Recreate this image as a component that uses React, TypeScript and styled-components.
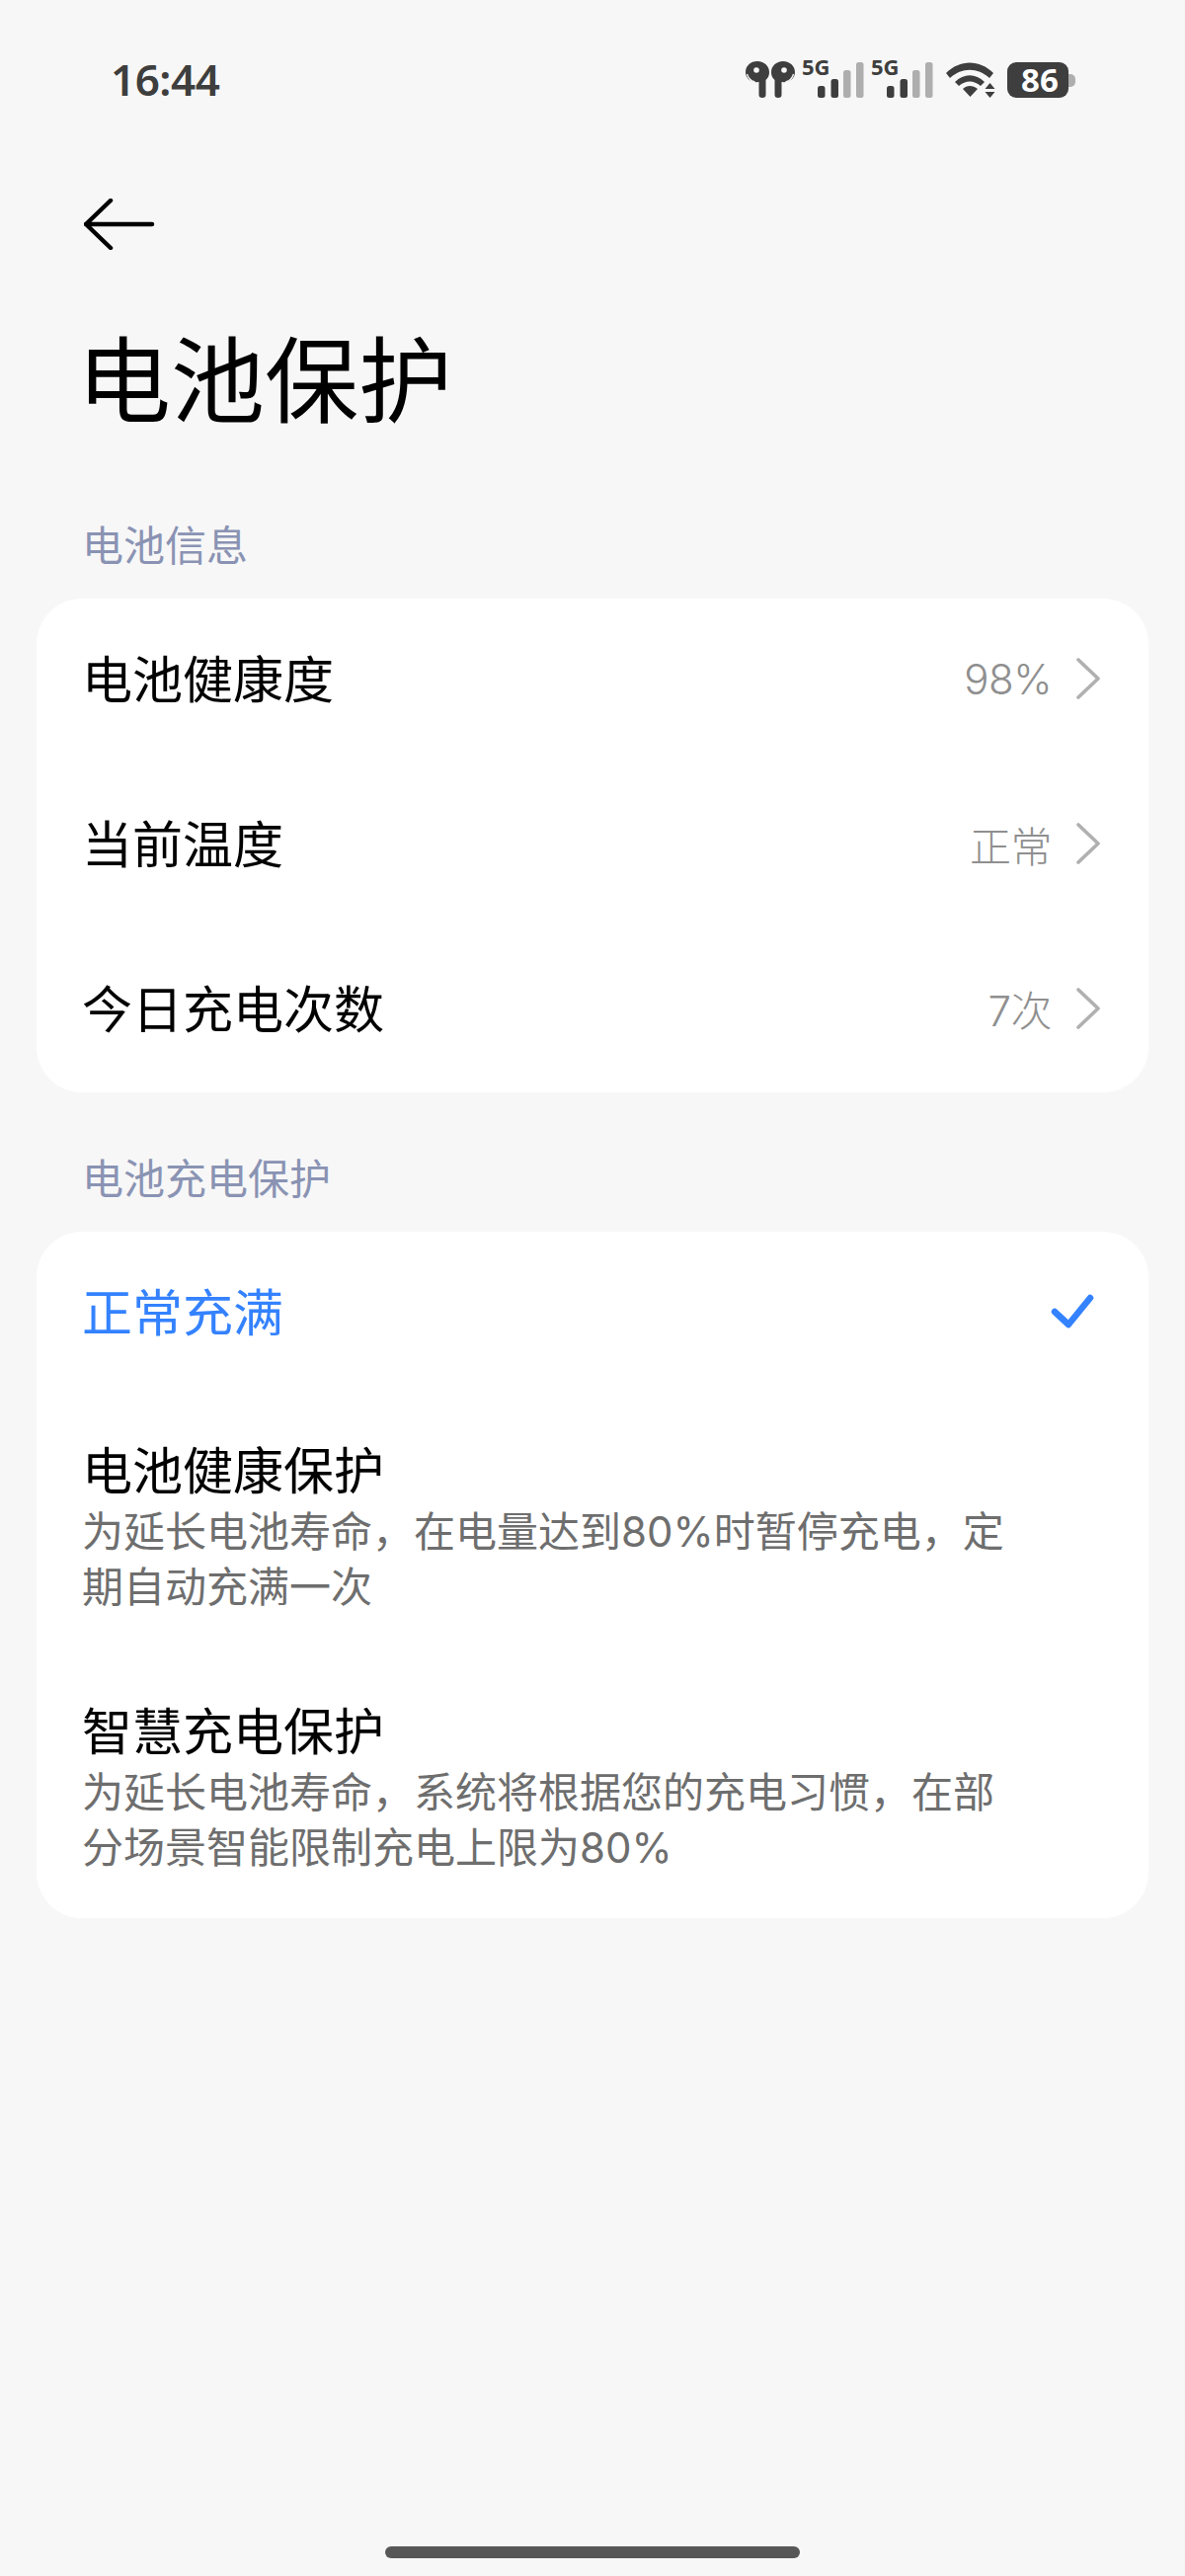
import styled, { createGlobalStyle } from "styled-components";

const GlobalStyle = createGlobalStyle`
  html, body {
    margin: 0;
    padding: 0;
    background: #f7f7f7;
  }
  * {
    box-sizing: border-box;
  }
`;

const cjk = `"Noto Sans CJK SC", "Noto Sans", sans-serif`;
const latinCjk = `Inter, "Noto Sans CJK SC", sans-serif`;

const Page = styled.div`
  width: 1200px;
  height: 2608px;
  background: #f7f7f7;
  font-family: ${cjk};
  display: flex;
  flex-direction: column;
  overflow: hidden;
`;

const StatusBar = styled.div`
  height: 80px;
  margin-top: 40px;
  padding: 0 111px 0 112px;
  display: flex;
  align-items: center;
  justify-content: space-between;
`;

const Time = styled.span`
  font-family: "Noto Sans", sans-serif;
  font-size: 44px;
  font-weight: 600;
  color: #3e3e3e;
  letter-spacing: -0.5px;
`;

const StatusIcons = styled.div`
  display: flex;
  align-items: flex-start;
  height: 40px;
  gap: 7px;
  svg {
    display: block;
    overflow: visible;
  }
`;

const WifiIcon = styled.svg`
  margin-left: 6px;
`;

const Battery = styled.div`
  position: relative;
  width: 62px;
  height: 36px;
  margin: 3px 7px 0 5px;
  padding-left: 4px;
  border-radius: 9px;
  background: #3e3e3e;
  color: #fff;
  font-family: "Noto Sans", sans-serif;
  font-size: 33px;
  font-weight: 700;
  line-height: 36px;
  text-align: center;
  &::after {
    content: "";
    position: absolute;
    right: -7px;
    top: 12px;
    width: 7px;
    height: 13px;
    border-radius: 0 5px 5px 0;
    background: #aeaeae;
  }
`;

const BackButton = styled.div`
  margin: 81px 0 0 85px;
  height: 52px;
  display: flex;
  align-items: center;
`;

const PageTitle = styled.h1`
  margin: 67px 0 0 78px;
  font-size: 95px;
  font-weight: 400;
  line-height: 120px;
  color: #000;
`;

const SectionLabel = styled.div<{ $top: number }>`
  margin: ${(p) => p.$top}px 0 0 83px;
  font-size: 42px;
  line-height: 60px;
  color: #8a93b3;
`;

const Card = styled.div`
  margin: 26px 37px 0;
  background: #fff;
  border-radius: 46px;
  display: flex;
  flex-direction: column;
`;

const NavRow = styled.div`
  height: 166.7px;
  padding: 0 48px 4px 46px;
  display: flex;
  align-items: center;
  justify-content: space-between;
`;

const RowTitle = styled.div<{ $active?: boolean }>`
  font-size: 51px;
  line-height: 66px;
  padding-bottom: 4px;
  color: ${(p) => (p.$active ? "#3482ff" : "#000")};
`;

const RowEnd = styled.div`
  display: flex;
  align-items: center;
  gap: 24px;
`;

const RowValue = styled.span`
  font-family: ${latinCjk};
  font-size: 42px;
  font-weight: 300;
  letter-spacing: -0.5px;
  color: #8f8f8f;
`;

const CheckSlot = styled.div`
  margin-right: 7px;
  display: flex;
`;

const OptionRow = styled.div`
  padding: 0 139px 3px 46px;
  height: 264px;
  display: flex;
  flex-direction: column;
  justify-content: center;
`;

const OptionNote = styled.div`
  font-family: ${latinCjk};
  font-size: 42px;
  line-height: 56px;
  color: #6e6e6e;
`;

const HomeBar = styled.div`
  margin: auto auto 18px;
  width: 420px;
  height: 12px;
  border-radius: 6px;
  background: #575757;
`;

const Chevron = () => (
  <svg width="26" height="42" viewBox="0 0 26 42" fill="none">
    <path d="M3 2l20 19L3 40" stroke="#b0b0b0" strokeWidth="3.6" strokeLinecap="round" strokeLinejoin="round" />
  </svg>
);

const Check = () => (
  <svg width="44" height="36" viewBox="0 0 44 36" fill="none">
    <path d="M4 18l14 13L40 4" stroke="#3482ff" strokeWidth="6.500" strokeLinecap="round" strokeLinejoin="round" />
  </svg>
);

const Earbuds = () => (
  <svg width="50" height="40" viewBox="0 0 50 40" fill="#3e3e3e">
    <path d="M12 2c7 0 12 5 12 11 0 3-1 6-3.500 8v15c0 2-1 3-3.500 3s-3.500-1-3.500-3V23C6 24 0 20 0 13 0 7 5 2 12 2z" />
    <path d="M38 2c-7 0-12 5-12 11 0 3 1 6 3.500 8v15c0 2 1 3 3.500 3s3.500-1 3.500-3V23c7 1 13.500-3 13.500-10 0-6-5-11-12-11z" />
    <circle cx="11" cy="11" r="2.800" fill="#f7f7f7" />
    <circle cx="39" cy="11" r="2.800" fill="#f7f7f7" />
    <path d="M1.500 15c1 4 4 7 8 8" fill="none" stroke="#f7f7f7" strokeWidth="1.300" />
    <path d="M48.500 15c-1 4-4 7-8 8" fill="none" stroke="#f7f7f7" strokeWidth="1.300" />
  </svg>
);

const Signal = () => (
  <svg width="63" height="40" viewBox="0 0 63 40">
    <text x="0" y="16" fontFamily="'Noto Sans', sans-serif" fontSize="22" fontWeight="700" fill="#3e3e3e">
      5G
    </text>
    <rect x="16" y="27" width="7.500" height="12" rx="2.500" fill="#3e3e3e" />
    <rect x="29.500" y="20" width="7.500" height="19" rx="2.500" fill="#3e3e3e" />
    <rect x="42" y="11" width="7.500" height="28" rx="2.500" fill="#aeaeae" />
    <rect x="55" y="3" width="7.500" height="36" rx="2.500" fill="#aeaeae" />
  </svg>
);

const Wifi = () => (
  <WifiIcon width="50" height="40" viewBox="0 -3 50 40" fill="#3e3e3e">
    <path d="M0 11C14-3 34-3 48 11l-4 5C32 5 16 5 4 16z" />
    <path d="M9 20c9-9 21-9 30 0l-4 4c-7-6-15-6-22 0z" />
    <path d="M17 27c4-4 10-4 15 0l-7.500 8z" />
    <path d="M39.500 27l5-6 5 6zM39.500 30h10l-5 6z" />
  </WifiIcon>
);

const infoRows = [
  { title: "电池健康度", value: "98%" },
  { title: "当前温度", value: "正常" },
  { title: "今日充电次数", value: "7次" },
];

const options = [
  {
    title: "电池健康保护",
    note: "为延长电池寿命，在电量达到80%时暂停充电，定期自动充满一次",
  },
  {
    title: "智慧充电保护",
    note: "为延长电池寿命，系统将根据您的充电习惯，在部分场景智能限制充电上限为80%",
  },
];

export default function App() {
  return (
    <Page>
      <GlobalStyle />
      <StatusBar>
        <Time>16:44</Time>
        <StatusIcons>
          <Earbuds />
          <Signal />
          <Signal />
          <Wifi />
          <Battery>86</Battery>
        </StatusIcons>
      </StatusBar>
      <BackButton>
        <svg width="72" height="52" viewBox="0 0 72 52" fill="none">
          <path d="M27 2L2 26l25 24M2 26h67" stroke="#000" strokeWidth="4.500" strokeLinecap="round" strokeLinejoin="round" />
        </svg>
      </BackButton>
      <PageTitle>电池保护</PageTitle>
      <SectionLabel $top={80}>电池信息</SectionLabel>
      <Card>
        {infoRows.map((row) => (
          <NavRow key={row.title}>
            <RowTitle>{row.title}</RowTitle>
            <RowEnd>
              <RowValue>{row.value}</RowValue>
              <Chevron />
            </RowEnd>
          </NavRow>
        ))}
      </Card>
      <SectionLabel $top={55}>电池充电保护</SectionLabel>
      <Card>
        <NavRow>
          <RowTitle $active>正常充满</RowTitle>
          <CheckSlot>
            <Check />
          </CheckSlot>
        </NavRow>
        {options.map((option) => (
          <OptionRow key={option.title}>
            <RowTitle>{option.title}</RowTitle>
            <OptionNote>{option.note}</OptionNote>
          </OptionRow>
        ))}
      </Card>
      <HomeBar />
    </Page>
  );
}
